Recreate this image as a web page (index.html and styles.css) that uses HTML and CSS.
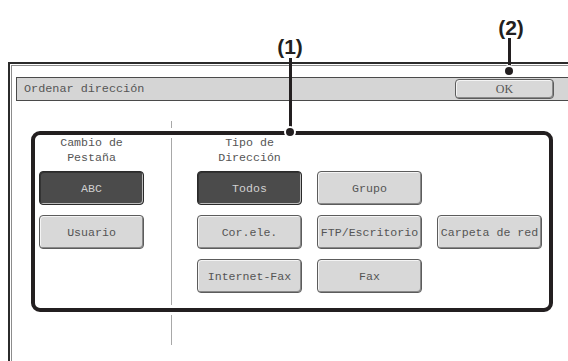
FILE: index.html
```html
<!DOCTYPE html>
<html lang="es">
<head>
    <meta charset="UTF-8">
    <meta name="viewport" content="width=device-width, initial-scale=1.0">
    <title>Ordenar dirección</title>
    <link rel="stylesheet" href="styles.css">
</head>
<body>

<div class="page">
    <div class="window">
        <div class="window-inner">
            <div class="titlebar">
                <span class="title">Ordenar dirección</span>
                <button class="btn ok">OK</button>
            </div>

            <div class="content">
                <div class="col col-tab">
                    <div class="col-head">Cambio de<br>Pestaña</div>
                    <div class="btn-list">
                        <button class="btn dark">ABC</button>
                        <button class="btn">Usuario</button>
                    </div>
                </div>
                <div class="col col-type">
                    <div class="col-head">Tipo de<br>Dirección</div>
                    <div class="btn-grid">
                        <button class="btn dark">Todos</button>
                        <button class="btn">Grupo</button>
                        <span></span>
                        <button class="btn">Cor.ele.</button>
                        <button class="btn">FTP/Escritorio</button>
                        <button class="btn">Carpeta de red</button>
                        <button class="btn">Internet-Fax</button>
                        <button class="btn">Fax</button>
                    </div>
                </div>
            </div>
        </div>
    </div>

    <!-- callouts -->
    <div class="frame"></div>
    <div class="callout c1">(1)</div>
    <div class="leader l1"></div>
    <div class="dot d1"></div>
    <div class="callout c2">(2)</div>
    <div class="leader l2"></div>
    <div class="dot d2"></div>
</div>

</body>
</html>
```

FILE: styles.css
```css
body {
    margin: 0;
    background-color: #fff;
    overflow: hidden;
    font-family: "Liberation Mono", "DejaVu Sans Mono", monospace;
    color: #555;
}
.page {
    position: relative;
    width: 568px;
    height: 361px;
    overflow: hidden;
    padding-top: 62px;
    box-sizing: border-box;
}
.window {
    margin-left: 8px;
    width: 580px;
    height: 320px;
    border-top: 2px solid #2b2b2b;
    border-left: 2px solid #2b2b2b;
    padding: 1px 0 0 1px;
}
.window-inner {
    height: 100%;
    border-top: 1px solid #8c8c8c;
    border-left: 1px solid #8c8c8c;
}
.titlebar {
    display: flex;
    align-items: center;
    margin: 11px 0 0 4px;
    height: 24px;
    box-sizing: border-box;
    border: 1px solid #4a4a4a;
    background-color: #d5d5d5;
    padding: 0 36px 0 7px;
}
.title {
    flex: 1;
    font-size: 11.8px;
}
.btn {
    font-family: "Liberation Mono", "DejaVu Sans Mono", monospace;
    font-weight: normal;
    font-size: 11.6px;
    color: #555;
    background-color: #d8d8d8;
    border: 1px solid #5c5c5c;
    border-radius: 4px;
    box-shadow: inset -1px -1px 0 #8a8a8a, inset 1px 1px 0 #f4f4f4;
    padding: 0;
    margin: 0;
    width: 105px;
    height: 34px;
}
.btn.dark {
    background-color: #4b4b4b;
    border-color: #2a2a2a;
    color: #d0d0d0;
    box-shadow: inset -1px -1px 0 #bdbdbd, inset 1px 1px 0 #333;
}
.btn.ok {
    font-family: "Liberation Serif", "Times New Roman", serif;
    font-size: 12px;
    width: 99px;
    height: 20px;
}
.content {
    display: flex;
    margin-top: 20px;
    height: 224px;
}
.col {
    padding-top: 14px;
    box-sizing: border-box;
}
.col-head {
    font-size: 11.6px;
    line-height: 15px;
    text-align: center;
    margin-bottom: 6px;
}
.col-tab {
    width: 160px;
    border-right: 1px solid #a8a8a8;
}
.btn-list {
    display: flex;
    flex-direction: column;
    align-items: center;
    gap: 10px;
}
.col-type {
    padding-left: 25px;
}
.col-type .col-head {
    width: 105px;
}
.btn-grid {
    display: grid;
    grid-template-columns: repeat(3, 105px);
    column-gap: 15px;
    row-gap: 10px;
}

/* callout annotations */
.frame {
    position: absolute;
    left: 31px;
    top: 131px;
    width: 522px;
    height: 181px;
    box-sizing: border-box;
    border: 4px solid #231f20;
    border-radius: 9px;
    box-shadow: 0 0 0 3px #fff, inset 0 0 0 3px #fff;
}
.callout {
    position: absolute;
    font-family: "Liberation Sans", Arial, sans-serif;
    font-weight: bold;
    font-size: 21px;
    line-height: 22px;
    color: #231f20;
    transform: translateX(-50%);
}
.c1 { left: 290px; top: 36px; }
.c2 { left: 511px; top: 17px; }
.leader {
    position: absolute;
    width: 3px;
    background-color: #231f20;
}
.l1 { left: 289px; top: 58px; height: 74px; }
.l2 { left: 508px; top: 38px; height: 32px; }
.dot {
    position: absolute;
    width: 8px;
    height: 8px;
    border-radius: 50%;
    background-color: #231f20;
    box-shadow: 0 0 0 2px #fff;
}
.d1 { left: 286px; top: 128px; }
.d2 { left: 505px; top: 67px; }
```
